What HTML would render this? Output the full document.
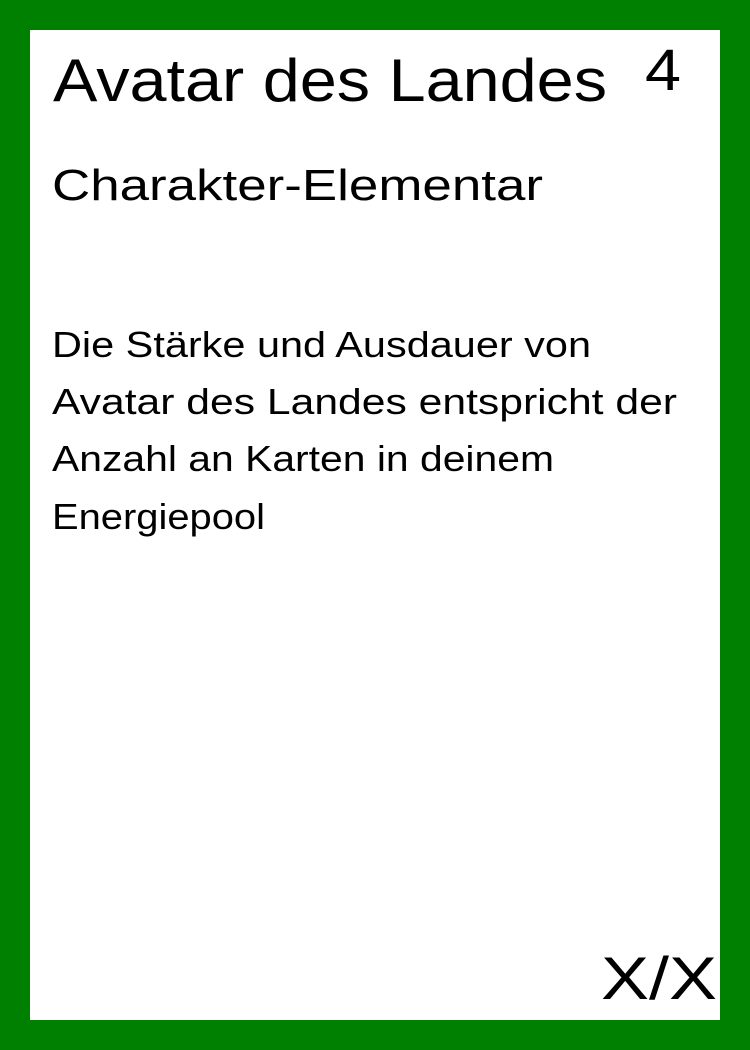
<!DOCTYPE html>
<html><head><meta charset="utf-8"><style>
html,body{margin:0;padding:0;background:#008000;}
svg{display:block;}
text{font-family:"Liberation Sans",sans-serif;fill:#000;}
</style></head><body>
<svg width="750" height="1050" viewBox="0 0 750 1050" xmlns="http://www.w3.org/2000/svg">
<rect x="0" y="0" width="750" height="1050" fill="#008000"/>
<rect x="30" y="30" width="690" height="990" fill="#fff"/>
<text x="53" y="101" font-size="60" textLength="554" lengthAdjust="spacingAndGlyphs">Avatar des Landes</text>
<text x="645" y="90" font-size="58" textLength="36" lengthAdjust="spacingAndGlyphs">4</text>
<text x="52" y="200" font-size="44" textLength="491" lengthAdjust="spacingAndGlyphs">Charakter-Elementar</text>
<text x="52" y="357" font-size="36" textLength="539" lengthAdjust="spacingAndGlyphs">Die Stärke und Ausdauer von</text>
<text x="52" y="414" font-size="36" textLength="625" lengthAdjust="spacingAndGlyphs">Avatar des Landes entspricht der</text>
<text x="52" y="471" font-size="36" textLength="502" lengthAdjust="spacingAndGlyphs">Anzahl an Karten in deinem</text>
<text x="52" y="529" font-size="36" textLength="213" lengthAdjust="spacingAndGlyphs">Energiepool</text>
<text x="601" y="999" font-size="60" textLength="116" lengthAdjust="spacingAndGlyphs">X/X</text>
</svg>
</body></html>
